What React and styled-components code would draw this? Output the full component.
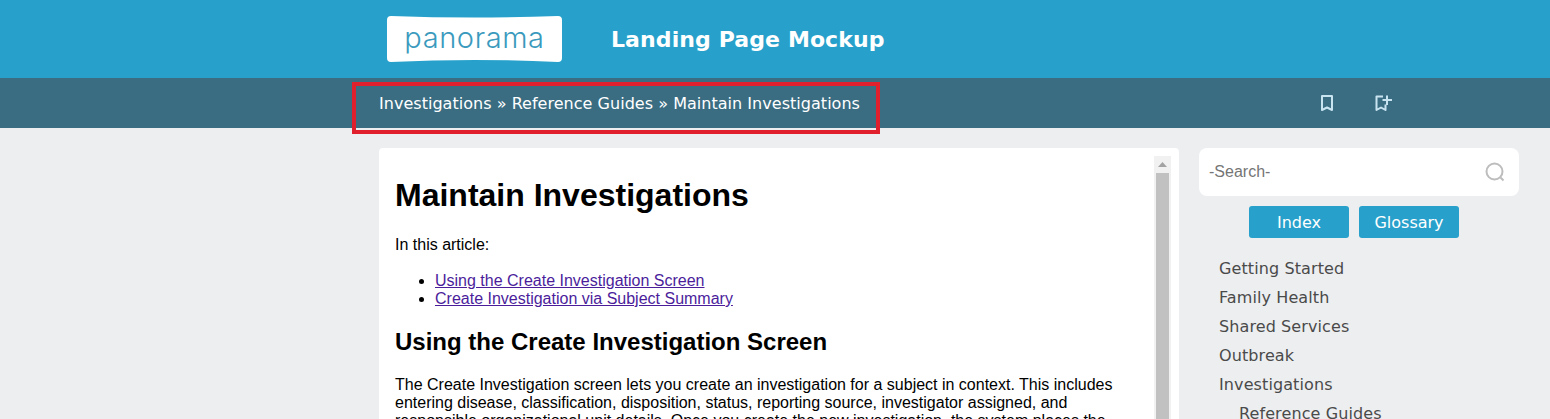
import React from 'react';
import styled, { createGlobalStyle } from 'styled-components';

const Global = createGlobalStyle`
  html, body { margin: 0; padding: 0; height: 419px; overflow: hidden; background: #edeef0; }
`;

const Page = styled.div`
  position: relative;
  width: 1550px;
  height: 419px;
  overflow: hidden;
  font-family: "DejaVu Sans", Verdana, sans-serif;
`;

const Banner = styled.header`
  height: 78px;
  background: #27a1cb;
  padding-left: 387px;
  display: flex;
  align-items: center;
  box-sizing: border-box;
`;

const LogoCard = styled.div`
  width: 175px;
  height: 46px;
  flex: none;
  display: flex;
  justify-content: center;
  background: #fff;
  clip-path: path('M4 0 Q87 3 171 0 Q175 0 175 4 L175 42 Q175 46 171 46 Q87 42 4 46 Q0 46 0 42 L0 4 Q0 0 4 0 Z');
  margin-right: 49px;
`;

const LogoText = styled.span`
  font-family: Inter, "Open Sans", sans-serif;
  font-size: 29px;
  line-height: 44px;
  font-weight: 300;
  letter-spacing: 0.6px;
  color: #3a9abd;
`;

const Title = styled.h1`
  margin: 0;
  font-size: 22px;
  font-weight: 700;
  color: #fff;
  letter-spacing: 0.1px;
`;

const CrumbBar = styled.div`
  height: 50px;
  background: #3a6d82;
  padding-left: 379px;
  display: flex;
  align-items: center;
  box-sizing: border-box;
`;

const Crumbs = styled.div`
  width: 900px;
  font-size: 16px;
  letter-spacing: 0.03px;
  color: #fff;
  white-space: nowrap;
`;

const CrumbIcons = styled.div`
  display: flex;
  align-items: center;
  gap: 40px;
  margin-left: 41px;
`;

const Annotation = styled.div`
  position: absolute;
  left: 352px;
  top: 82px;
  width: 528px;
  height: 52px;
  box-sizing: border-box;
  border: 4px solid #e0202c;
`;

const Body = styled.div`
  display: flex;
  padding: 20px 0 0 379px;
  gap: 20px;
  align-items: flex-start;
`;

const Article = styled.main`
  position: relative;
  width: 800px;
  height: 300px;
  flex: none;
  box-sizing: border-box;
  background: #fff;
  border-radius: 4px 4px 0 0;
  padding: 0 30px 0 16px;
  overflow: hidden;
  font-family: "Liberation Sans", Arial, sans-serif;
  font-size: 16px;
  line-height: 18px;
  color: #000;
`;

const Heading = styled.h2`
  margin: 29px 0 0;
  font-size: 32px;
  line-height: 37px;
  font-weight: 700;
`;

const Para = styled.p`
  margin: ${(p) => p.$top || '22px'} 0 0;
`;

const LinkList = styled.ul`
  margin: 18px 0 0;
  padding-left: 40px;
`;

const ArticleLink = styled.a`
  color: #4b1d9b;
  text-decoration: underline;
`;

const SubHeading = styled.h3`
  margin: 20px 0 0;
  font-size: 24px;
  line-height: 28px;
  font-weight: 700;
`;

const Scrollbar = styled.div`
  position: absolute;
  top: 8px;
  right: 8px;
  bottom: 0;
  width: 17px;
  display: flex;
  flex-direction: column;
  align-items: center;
  background: #f1f1f1;
`;

const ScrollArrow = styled.div`
  height: 17px;
  display: flex;
  align-items: center;
  justify-content: center;
`;

const ScrollThumb = styled.div`
  flex: 1;
  width: 13px;
  background: #c1c1c1;
`;

const Sidebar = styled.aside`
  width: 320px;
  flex: none;
`;

const Search = styled.div`
  height: 48px;
  background: #fff;
  border-radius: 8px;
  display: flex;
  align-items: center;
  justify-content: space-between;
  padding: 0 14px 0 10px;
  box-sizing: border-box;
  font-family: "Liberation Sans", Arial, sans-serif;
  font-size: 16px;
  color: #757575;
`;

const ButtonRow = styled.div`
  display: flex;
  justify-content: center;
  gap: 10px;
  margin-top: 10px;
  padding-right: 10px;
`;

const SideButton = styled.button`
  width: 100px;
  height: 32px;
  padding: 1px 0 0;
  border: 0;
  border-radius: 3px;
  background: #27a1cb;
  color: #fff;
  font-family: "DejaVu Sans", Verdana, sans-serif;
  font-size: 16px;
`;

const Nav = styled.nav`
  margin-top: 16px;
  padding-left: 20px;
`;

const NavItem = styled.div`
  height: 29px;
  line-height: 29px;
  font-size: 16px;
  letter-spacing: 0.1px;
  color: #4a4a4a;
  padding-left: ${(p) => (p.$nested ? '20px' : '0')};
  white-space: nowrap;
`;

const BookmarkIcon = () => (
  <svg width="14" height="18" viewBox="0 0 14 18" fill="none" stroke="#c9e4f1" strokeWidth="2" strokeLinejoin="round">
    <path d="M2 2h10v14l-5-2.500L2 16z" />
  </svg>
);

const BookmarkPlusIcon = () => (
  <svg width="18" height="18" viewBox="0 0 18 18" fill="none" stroke="#c9e4f1" strokeWidth="2" strokeLinejoin="round">
    <path d="M9 2.500H2.500V16l4.500-2.500 4.500 2.500V10.500" />
    <path d="M13 1.500v9.500M8.500 6H18" />
  </svg>
);

const SearchIcon = () => (
  <svg width="20" height="20" viewBox="0 0 20 20" fill="none" stroke="#bdbdbd" strokeWidth="2">
    <circle cx="9.500" cy="9.500" r="8" />
    <path d="M15.500 15.500l3 3" />
  </svg>
);

const nav = ['Getting Started', 'Family Health', 'Shared Services', 'Outbreak', 'Investigations'];

export default function App() {
  return (
    <Page>
      <Global />
      <Banner>
        <LogoCard>
          <LogoText>panorama</LogoText>
        </LogoCard>
        <Title>Landing Page Mockup</Title>
      </Banner>
      <CrumbBar>
        <Crumbs>Investigations » Reference Guides » Maintain Investigations</Crumbs>
        <CrumbIcons>
          <BookmarkIcon />
          <BookmarkPlusIcon />
        </CrumbIcons>
      </CrumbBar>
      <Annotation />
      <Body>
        <Article>
          <Heading>Maintain Investigations</Heading>
          <Para>In this article:</Para>
          <LinkList>
            <li><ArticleLink href="#using">Using the Create Investigation Screen</ArticleLink></li>
            <li><ArticleLink href="#summary">Create Investigation via Subject Summary</ArticleLink></li>
          </LinkList>
          <SubHeading>Using the Create Investigation Screen</SubHeading>
          <Para $top="20px">
            The Create Investigation screen lets you create an investigation for a subject in context. This includes
            entering disease, classification, disposition, status, reporting source, investigator assigned, and
            responsible organizational unit details. Once you create the new investigation, the system places the
          </Para>
          <Scrollbar>
            <ScrollArrow>
              <svg width="9" height="5" viewBox="0 0 9 5"><path d="M4.500 0L9 5H0z" fill="#a3a3a3" /></svg>
            </ScrollArrow>
            <ScrollThumb />
          </Scrollbar>
        </Article>
        <Sidebar>
          <Search>
            -Search-
            <SearchIcon />
          </Search>
          <ButtonRow>
            <SideButton>Index</SideButton>
            <SideButton>Glossary</SideButton>
          </ButtonRow>
          <Nav>
            {nav.map((item) => <NavItem key={item}>{item}</NavItem>)}
            <NavItem $nested>Reference Guides</NavItem>
          </Nav>
        </Sidebar>
      </Body>
    </Page>
  );
}
